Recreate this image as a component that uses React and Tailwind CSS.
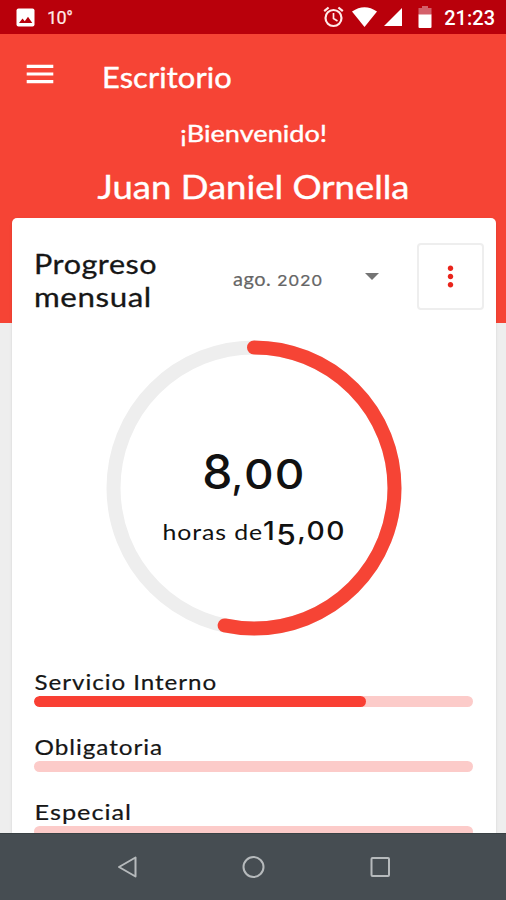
import { MdMoreVert } from "react-icons/md";

const services = [
  { name: "Servicio Interno", percent: 75.6, scale: "scale-x-[1.1]" },
  { name: "Obligatoria", percent: 0, scale: "scale-x-[1.105]" },
  { name: "Especial", percent: 0, scale: "scale-x-[1.15]" },
];

function StatusBar() {
  return (
    <div className="flex h-[34px] shrink-0 items-center bg-[#b9000b] pr-[11px] pl-[16px] font-['Roboto',sans-serif] text-white">
      <svg className="h-[19px] w-[19px]" viewBox="0 0 19 19">
        <rect x="0.5" y="0.5" width="18" height="18" rx="2" fill="#fff" />
        <path d="M3 15l3.5-4.5 2.3 2.7 3.2-4.4 4.3 6.2z" fill="#b9000b" />
      </svg>
      <span className="ml-[12px] text-[18px] tracking-[-0.5px] text-[#ffe9e9] [-webkit-text-stroke:0.2px]">10°</span>

      <svg className="ml-auto h-[22px] w-[21px]" viewBox="0 0 21 22" fill="none" stroke="#ffe9e9">
        <circle cx="10.5" cy="12" r="8" strokeWidth="2.2" />
        <path d="M10.5 7v5.5l4 2.4" strokeWidth="1.7" />
        <path d="M1.2 5.2l4.4-3.7M19.8 5.2l-4.4-3.7" strokeWidth="2.2" />
      </svg>
      <svg className="ml-[8px] h-[20px] w-[25px]" viewBox="0 0 25 20">
        <path d="M0 4.5Q12.5-4 25 4.5L12.5 20z" fill="#fff" />
      </svg>
      <svg className="ml-[7px] h-[18px] w-[18px]" viewBox="0 0 18 18">
        <path d="M18 0v18H0z" fill="#fff" />
      </svg>
      <svg className="ml-[16px] h-[22px] w-[14px]" viewBox="0 0 14 22">
        <path d="M4 0h6v2h3.5v7H.5V2H4z" fill="#d4606a" />
        <path d="M.5 8.5h13V21q0 1-1 1h-11q-1 0-1-1z" fill="#fff" />
      </svg>
      <span className="ml-[12px] pt-px text-[20px] font-medium">21:23</span>
    </div>
  );
}

function Header() {
  return (
    <div className="h-[289px] shrink-0 bg-[#f64435] text-white [-webkit-text-stroke:0.4px]">
      <div className="flex h-[84px] items-center pl-[26px]">
        <svg className="mb-[5px] h-[20px] w-[28px]" viewBox="0 0 28 20" stroke="#fff" strokeWidth="3.2">
          <path d="M.7 2.4h26.6M.7 10h26.6M.7 17.6h26.6" />
        </svg>
        <h1 className="ml-[48px] origin-left scale-x-[1.1] pt-[2px] text-[28px] tracking-[0.1px]">Escritorio</h1>
      </div>
      <p className="scale-x-[1.13] pl-px text-center text-[24px] leading-[30px]">¡Bienvenido!</p>
      <p className="scale-x-[1.14] pl-px text-center text-[32px] leading-[77px]">Juan Daniel Ornella</p>
    </div>
  );
}

function ProgressRing({ value, total }) {
  const radius = 140.5;
  const length = 2 * Math.PI * radius;

  return (
    <div className="relative mx-auto mt-[30px] h-[296px] w-[296px]">
      <svg className="h-full w-full" viewBox="0 0 296 296" fill="none" strokeWidth="14">
        <circle cx="148" cy="148" r={radius} stroke="#eeeeee" />
        <circle
          cx="148"
          cy="148"
          r={radius}
          stroke="#f64435"
          strokeLinecap="round"
          strokeDasharray={`${(length * value) / total} ${length}`}
          transform="rotate(-90 148 148)"
        />
      </svg>
      {/* zeros are set smaller, like old style figures */}
      <div className="absolute inset-0 flex flex-col items-center pt-[102px] text-[#111]">
        <p className="mr-[7px] font-['Inter',sans-serif] text-[49px] leading-[60px] font-medium whitespace-nowrap">
          <span className="text-[48px] tracking-[-1px]">8</span>
          <span className="text-[38px]">,</span>
          <span className="ml-px inline-block origin-left scale-x-[1.12] text-[41px] tracking-[1px]">00</span>
        </p>
        <p className="mt-[5px] scale-x-[1.13] text-[22px] leading-[40px] tracking-[1px] whitespace-nowrap">
          <span className="tracking-[0.8px]">horas de</span>
          <span className="font-['Inter',sans-serif] text-[25px] font-medium tracking-[1.3px]">
            1<span className="relative top-[5px] text-[28px]">5</span>,00
          </span>
        </p>
      </div>
    </div>
  );
}

function ServiceBar({ name, percent, scale }) {
  return (
    <div className="mb-[26px]">
      <p
        className={`w-fit origin-left pl-[0.5px] text-[22px] leading-[28px] tracking-[0.85px] whitespace-nowrap [-webkit-text-stroke:0.2px] ${scale}`}
      >
        {name}
      </p>
      <div className="h-[11px] overflow-hidden rounded-full bg-[#fccbc9]">
        <div className="h-full rounded-full bg-[#f93f33]" style={{ width: `${percent}%` }} />
      </div>
    </div>
  );
}

function NavBar() {
  return (
    <div className="z-10 flex h-[67px] shrink-0 items-center justify-center gap-[104px] border-t border-[#394144] bg-[#464d52]">
      <svg className="h-[24px] w-[22px]" viewBox="0 0 22 24" fill="none" stroke="#b6babc" strokeWidth="2">
        <path d="M20.5 2.5v19L4 12z" strokeLinejoin="round" />
      </svg>
      <svg className="h-[24px] w-[24px]" viewBox="0 0 24 24" fill="none" stroke="#b6babc" strokeWidth="2">
        <circle cx="12.5" cy="12" r="10" />
      </svg>
      <svg className="h-[24px] w-[22px]" viewBox="0 0 22 24" fill="none" stroke="#b6babc" strokeWidth="2">
        <rect x="2.5" y="3" width="17.5" height="18" rx="1" />
      </svg>
    </div>
  );
}

export default function App() {
  return (
    <div className="flex h-[900px] w-[506px] flex-col overflow-hidden bg-[#eeeeee] font-['Lato',sans-serif]">
      <StatusBar />
      <div className="flex min-h-0 flex-1 flex-col overflow-hidden">
        <Header />
        <div className="z-10 -mt-[105px] mr-[10px] ml-[12px] h-[700px] shrink-0 rounded-[5px] bg-white pt-[25px] text-[#161616] shadow-sm">
          <div className="flex h-[67px] items-center pr-[12px] pl-[22px]">
            <div className="w-[199px]">
              <h2 className="w-fit pt-[6px] text-[27px] leading-[33px] tracking-[0.5px] [-webkit-text-stroke:0.3px]">
                <span className="block w-fit origin-left scale-x-[1.13]">Progreso</span>
                <span className="block w-fit origin-left scale-x-[1.16]">mensual</span>
              </h2>
            </div>
            <span className="pt-[3px] text-[20px] tracking-[0.5px] text-[#666] [-webkit-text-stroke:0.2px]">
              ago.{" "}
              <span className="inline-block origin-left scale-x-[1.25] font-['Inter',sans-serif] text-[14px]">
                2020
              </span>
            </span>
            <svg className="ml-auto h-[7px] w-[14px]" viewBox="0 0 14 7">
              <path d="M0 0h14L7 7z" fill="#747474" />
            </svg>
            <button className="ml-[38px] flex h-[67px] w-[67px] items-center justify-center rounded-[4px] border-2 border-[#eeeeee] text-[#e9241b]">
              <MdMoreVert className="h-[33px] w-[33px]" />
            </button>
          </div>
          <ProgressRing value={8} total={15} />
          <div className="mt-[32px] pr-[23px] pl-[22px]">
            {services.map((service) => (
              <ServiceBar key={service.name} {...service} />
            ))}
          </div>
        </div>
      </div>
      <NavBar />
    </div>
  );
}
